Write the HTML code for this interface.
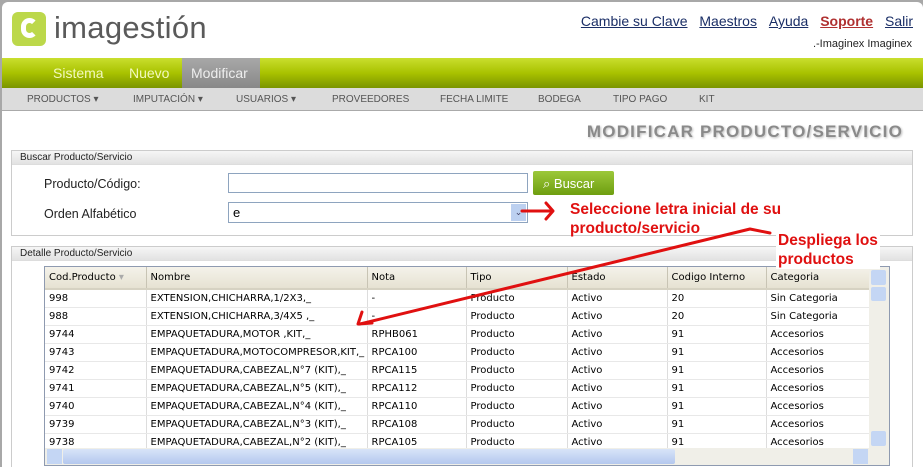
<!DOCTYPE html>
<html><head><meta charset="utf-8"><style>
*{box-sizing:border-box;margin:0;padding:0}
body{width:923px;height:467px;overflow:hidden;background:#a8a8a8;font-family:"Liberation Sans",sans-serif;position:relative}
.win{position:absolute;left:2px;top:2px;right:0;bottom:0;background:#fff;border-radius:6px 6px 0 0;overflow:hidden}
.abs{position:absolute}
.logo{left:10px;top:10px;width:34px;height:34px;background:#bcd84a;border-radius:6px}
.brand{left:52px;top:8px;font-size:31px;color:#5a5a5a;letter-spacing:0.3px}
.links{right:10px;top:11px;font-size:14px}
.links a{color:#1a2e66;text-decoration:underline;margin-left:8px}
.green{left:0;right:0;top:56px;height:30px;background:linear-gradient(#c9df2e,#a9c200 50%,#7a9400);}
.green span{position:absolute;top:7px;font-size:14px;color:#f3f9c0}
.menu{left:0;right:0;top:86px;height:23px;background:#dcdcdc;border-bottom:1px solid #aaa}
.menu span{position:absolute;top:6px;font-size:10px;color:#555}
.title{right:20px;top:120px;font-size:17px;letter-spacing:1.2px;font-weight:bold;color:#8a8a8a;text-shadow:1px 1px 2px #bbb}
.fs{border:1px solid #ccc;background:#fff}
.leg{height:14px;background:linear-gradient(#f6f6f6,#e2e2e2);font-size:10px;color:#222;padding:1px 8px;border-bottom:1px solid #ddd}
.lbl{font-size:12.5px;color:#222}
.inp{border:1px solid #8ea4bf;background:#fff}
table{border-collapse:collapse;font-family:"DejaVu Sans",sans-serif;font-size:10px;color:#000}
td{height:18px;padding:0 4px;border-right:1px solid #ddd;border-bottom:1px solid #e8e8e8;white-space:nowrap;overflow:hidden}
th{height:22px;background:linear-gradient(#f4f2ea,#e6e2d2);font-weight:normal;text-align:left;padding:0 4px;border-right:1px solid #c8c4b4;border-bottom:2px solid #d6d2c2}
.ann{color:#e01010;font-weight:bold;font-size:15.5px}
</style></head><body>
<div class="win">
<div class="abs logo"><div style="position:absolute;left:9px;top:6px;width:17px;height:20px;border:5px solid #fff;border-right-color:transparent;border-radius:9px"></div></div>
<div class="abs brand">imagestión</div>
<div class="abs links"><a>Cambie su Clave</a> <a>Maestros</a> <a>Ayuda</a> <a style="color:#b03030;font-weight:bold">Soporte</a> <a>Salir</a></div>
<div class="abs" style="right:11px;top:36px;font-size:11px;color:#222">.-Imaginex Imaginex</div>
<div class="abs green">
<span style="left:51px">Sistema</span><span style="left:127px">Nuevo</span>
<div class="abs" style="left:180px;top:0;width:78px;height:30px;background:linear-gradient(#a8a8a8,#888)"></div>
<span style="left:189px;color:#eee">Modificar</span></div>
<div class="abs menu">
<span style="left:25px">PRODUCTOS ▾</span><span style="left:131px">IMPUTACIÓN ▾</span><span style="left:234px">USUARIOS ▾</span><span style="left:330px">PROVEEDORES</span><span style="left:438px">FECHA LIMITE</span><span style="left:536px">BODEGA</span><span style="left:611px">TIPO PAGO</span><span style="left:697px">KIT</span></div>
<div class="abs title">MODIFICAR PRODUCTO/SERVICIO</div>

<div class="abs fs" style="left:9px;top:148px;width:902px;height:86px"><div class="leg">Buscar Producto/Servicio</div></div>
<div class="abs lbl" style="left:42px;top:175px">Producto/Código:</div>
<div class="abs lbl" style="left:42px;top:205px">Orden Alfabético</div>
<div class="abs inp" style="left:226px;top:171px;width:300px;height:20px"></div>
<div class="abs" style="left:531px;top:169px;width:81px;height:24px;background:linear-gradient(#9cc83a,#6e9e10);border-radius:2px;font-size:13px;color:#fff;padding:5px 0 0 10px">⌕ Buscar</div>
<div class="abs inp" style="left:226px;top:200px;width:300px;height:21px;font-size:13px;padding:2px 4px">e<div class="abs" style="right:1px;top:1px;width:15px;height:17px;background:#bcd0f0;font-size:9px;color:#446;text-align:center;line-height:17px">⌄</div></div>

<div class="abs fs" style="left:9px;top:244px;width:902px;height:230px"><div class="leg">Detalle Producto/Servicio</div></div>
<div class="abs" style="left:42px;top:264px;width:846px;height:200px;border:1px solid #8e9ab0;overflow:hidden;background:#fff">
<table style="width:824px;table-layout:fixed">
<colgroup><col style="width:101px"><col style="width:221px"><col style="width:99px"><col style="width:101px"><col style="width:100px"><col style="width:99px"><col style="width:103px"></colgroup>
<tr><th>Cod.Producto <span style="color:#aaa">▾</span></th><th>Nombre</th><th>Nota</th><th>Tipo</th><th>Estado</th><th>Codigo Interno</th><th>Categoria</th></tr>
<tr><td>998</td><td>EXTENSION,CHICHARRA,1/2X3,_</td><td>-</td><td>Producto</td><td>Activo</td><td>20</td><td>Sin Categoria</td></tr>
<tr><td>988</td><td>EXTENSION,CHICHARRA,3/4X5 ,_</td><td>-</td><td>Producto</td><td>Activo</td><td>20</td><td>Sin Categoria</td></tr>
<tr><td>9744</td><td>EMPAQUETADURA,MOTOR ,KIT,_</td><td>RPHB061</td><td>Producto</td><td>Activo</td><td>91</td><td>Accesorios</td></tr>
<tr><td>9743</td><td>EMPAQUETADURA,MOTOCOMPRESOR,KIT,_</td><td>RPCA100</td><td>Producto</td><td>Activo</td><td>91</td><td>Accesorios</td></tr>
<tr><td>9742</td><td>EMPAQUETADURA,CABEZAL,N°7 (KIT),_</td><td>RPCA115</td><td>Producto</td><td>Activo</td><td>91</td><td>Accesorios</td></tr>
<tr><td>9741</td><td>EMPAQUETADURA,CABEZAL,N°5 (KIT),_</td><td>RPCA112</td><td>Producto</td><td>Activo</td><td>91</td><td>Accesorios</td></tr>
<tr><td>9740</td><td>EMPAQUETADURA,CABEZAL,N°4 (KIT),_</td><td>RPCA110</td><td>Producto</td><td>Activo</td><td>91</td><td>Accesorios</td></tr>
<tr><td>9739</td><td>EMPAQUETADURA,CABEZAL,N°3 (KIT),_</td><td>RPCA108</td><td>Producto</td><td>Activo</td><td>91</td><td>Accesorios</td></tr>
<tr><td>9738</td><td>EMPAQUETADURA,CABEZAL,N°2 (KIT),_</td><td>RPCA105</td><td>Producto</td><td>Activo</td><td>91</td><td>Accesorios</td></tr>
</table>
<div class="abs" style="right:0;top:0;width:20px;height:200px;background:#f0efe8"><div class="abs" style="left:2px;top:3px;width:15px;height:15px;background:#c4d6f4;border-radius:2px"></div><div class="abs" style="left:2px;top:20px;width:15px;height:14px;background:#c4d6f4;border-radius:2px"></div><div class="abs" style="left:2px;top:164px;width:15px;height:15px;background:#c4d6f4;border-radius:2px"></div></div>
<div class="abs" style="left:0;top:181px;width:826px;height:18px;background:#f0efe8"><div class="abs" style="left:2px;top:1px;width:15px;height:15px;background:#c4d6f4"></div><div class="abs" style="left:18px;top:1px;width:612px;height:15px;background:linear-gradient(#d8e4f8,#b4c8ee);border-radius:2px"></div><div class="abs" style="left:808px;top:1px;width:15px;height:15px;background:#c4d6f4"></div></div>
</div>

<div class="abs ann" style="left:568px;top:198px;line-height:19px">Seleccione letra inicial de su<br>producto/servicio</div>
<div class="abs ann" style="left:774px;top:229px;line-height:19px;background:#fff;padding:0 2px">Despliega los<br>productos</div>
</div>
<svg class="abs" style="left:0;top:0" width="923" height="467"><g stroke="#e01010" stroke-width="3" fill="none" stroke-linecap="round" stroke-linejoin="round">
<path d="M522 211 L553 211 M546 203 L553 211 L546 219"/>
<path d="M770 233 L750 229 L360 324 M362 312 L358 324 L372 323"/>
</g></svg>
</body></html>
